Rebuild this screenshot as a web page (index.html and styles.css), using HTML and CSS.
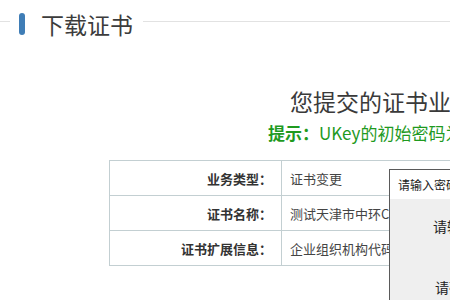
FILE: index.html
```html
<!DOCTYPE html>
<html lang="zh">
<head>
<meta charset="utf-8">
<title>下载证书</title>
<link rel="stylesheet" href="styles.css">
</head>
<body>
<div class="page">
  <div class="section-head">
    <span class="rule rule-short"></span>
    <span class="bar"></span>
    <h1 class="title">下载证书</h1>
    <span class="rule rule-long"></span>
  </div>

  <div class="notice">
    <p class="notice-main">您提交的证书业务已办理成功，请下载证书</p>
    <p class="notice-tip"><b>提示：</b>UKey的初始密码为12345678</p>
  </div>

  <table class="info">
    <tr>
      <th>业务类型：</th>
      <td>证书变更</td>
    </tr>
    <tr>
      <th>证书名称：</th>
      <td>测试天津市中环CA有限公司</td>
    </tr>
    <tr>
      <th>证书扩展信息：</th>
      <td>企业组织机构代码</td>
    </tr>
  </table>

  <div class="dialog">
    <div class="dialog-head">请输入密码</div>
    <div class="dialog-body">
      <p class="dialog-line first">请输入UKey密码</p>
      <p class="dialog-line second">请确认密码</p>
    </div>
  </div>
</div>
</body>
</html>
```

FILE: styles.css
```css
html, body {
  margin: 0;
  padding: 0;
  background: #fff;
  overflow: hidden;
}
body {
  font-family: "Noto Sans CJK SC", "Noto Sans", "Liberation Sans", sans-serif;
  color: #333;
  width: 450px;
  height: 300px;
}
.page {
  position: relative;
  width: 450px;
  height: 300px;
  overflow: hidden;
}
.section-head {
  display: flex;
  align-items: center;
  height: 42px;
  padding-top: 5px;
  box-sizing: border-box;
}
.rule {
  height: 1px;
  background: #e2e2e2;
  align-self: flex-start;
  margin-top: 16px;
}
.rule-short {
  width: 10px;
  flex: none;
}
.rule-long {
  flex: 1;
  margin-left: 10px;
}
.bar {
  flex: none;
  width: 6px;
  height: 22px;
  border-radius: 3px;
  background: #3f7db6;
  margin-left: 9px;
}
.title {
  margin: 0 0 0 16px;
  font-size: 23px;
  font-weight: normal;
  color: #3c3c3c;
  line-height: 32px;
  white-space: nowrap;
}
.notice {
  margin-top: 44px;
  white-space: nowrap;
}
.notice p {
  margin: 0;
}
.notice-main {
  padding-left: 290px;
  font-size: 23px;
  line-height: 30px;
  color: #3a3a3a;
}
.notice-tip {
  padding-left: 268px;
  font-size: 17px;
  line-height: 26px;
  margin-top: 4px !important;
  color: #1f9a1f;
}
.notice-tip b {
  font-weight: bold;
}
.info {
  margin-top: 14px;
  margin-left: 109px;
  width: 560px;
  border-collapse: collapse;
  table-layout: fixed;
}
.info th,
.info td {
  border: 1px solid #c3cfd2;
  height: 34px;
  padding: 0;
  white-space: nowrap;
  overflow: hidden;
}
.info th {
  width: 162px;
  text-align: right;
  padding-right: 9px;
  font-size: 13px;
  font-weight: bold;
  color: #333;
}
.info td {
  padding-left: 8px;
  font-size: 13px;
  color: #444;
}
.dialog {
  position: absolute;
  left: 389px;
  top: 169px;
  width: 240px;
  height: 200px;
  border: 1px solid #5a5a5a;
  background: #efefef;
}
.dialog-head {
  height: 29px;
  line-height: 29px;
  background: #fff;
  padding-left: 8px;
  font-size: 12px;
  color: #222;
  white-space: nowrap;
}
.dialog-body {
  padding-left: 43px;
}
.dialog-line {
  margin: 0;
  font-size: 14px;
  color: #222;
  white-space: nowrap;
  line-height: 20px;
}
.dialog-line.first {
  padding-top: 17px;
}
.dialog-line.second {
  padding-top: 41px;
  padding-left: 2px;
}
```
